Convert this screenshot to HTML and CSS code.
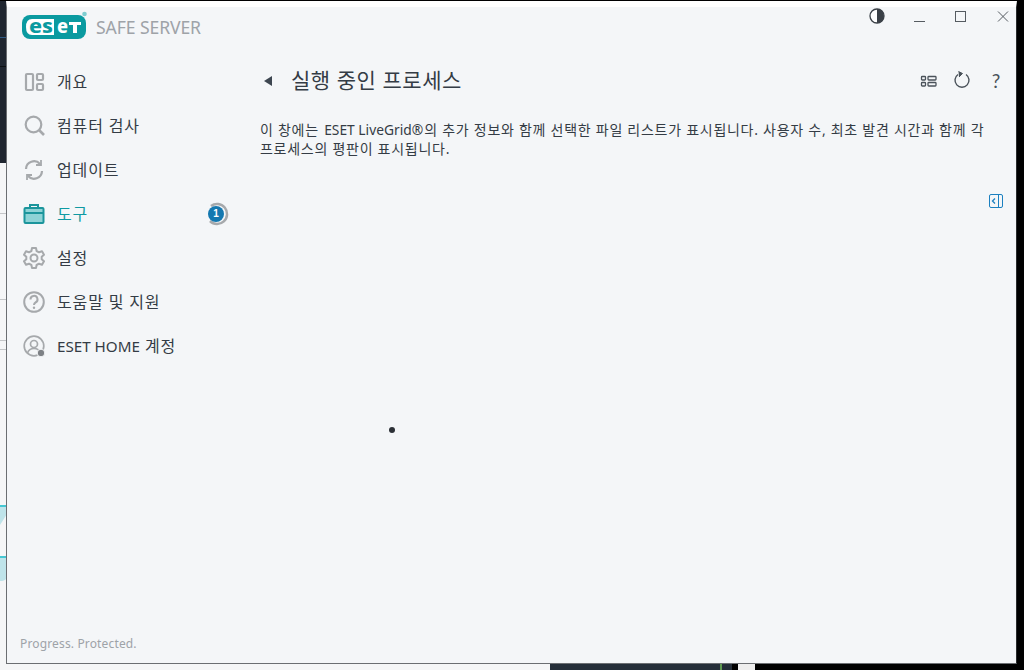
FILE: index.html
```html
<!DOCTYPE html>
<html lang="ko">
<head>
<meta charset="utf-8">
<title>ESET Safe Server</title>
<link rel="stylesheet" href="styles.css">
</head>
<body>
<div class="desk desk-dark"><i class="dl dl-blue"></i><i class="dl dl-black"></i></div>
<div class="desk desk-light"><i class="gl gl1"></i><i class="gl gl2"></i><i class="gl gl3"></i><i class="gl gl4"></i><i class="tl tl1"></i><i class="tl tl2"></i></div>
<div class="desk desk-bar"></div>
<div class="desk desk-pale"></div>
<div class="desk desk-tick"></div>

<div class="window">
  <aside class="sidebar">
    <div class="brand">
      <svg class="logo" width="68" height="28" viewBox="0 0 68 28">
        <rect x="1" y="3" width="64" height="24" rx="8" fill="#0a9aa0"/>
        <path d="M11 7 H33 V23 H11 Q5 23 5 15 Q5 7 11 7 Z" fill="#fff"/>
        <text class="logo-a" x="8" y="21" textLength="24" lengthAdjust="spacingAndGlyphs">es</text>
        <text class="logo-b" x="36" y="21" textLength="11" lengthAdjust="spacingAndGlyphs">e</text>
        <path d="M48 10 H60 V13 H56 V21 H52 V13 H48 Z" fill="#fff"/>
        <circle cx="63.500" cy="2" r="2.300" fill="#7fcdd0"/>
      </svg>
      <span class="product">SAFE SERVER</span>
    </div>
    <nav class="nav">
      <a class="nav-item">
        <svg class="ico" viewBox="0 0 22 22" fill="none" stroke="#a6a9ac" stroke-width="2.200"><rect x="3" y="3" width="7" height="16" rx="1"/><rect x="14" y="3" width="6" height="6" rx="1"/><rect x="14" y="13" width="6" height="6" rx="1"/></svg>
        <span>개요</span>
      </a>
      <a class="nav-item">
        <svg class="ico" viewBox="0 0 22 22" fill="none" stroke="#a6a9ac" stroke-width="2.200"><circle cx="10.500" cy="9.500" r="7.800"/><path d="M16 15 L21 20" stroke-width="2.600"/></svg>
        <span>컴퓨터 검사</span>
      </a>
      <a class="nav-item">
        <svg class="ico" viewBox="0 0 22 22" fill="none" stroke="#a6a9ac" stroke-width="2.200"><path d="M3 10 A8 8 0 0 1 17 5"/><path d="M19 12 A8 8 0 0 1 5 17"/><path d="M18 1 V6 H13" stroke-width="1.800"/><path d="M4 21 V16 H9" stroke-width="1.800"/></svg>
        <span>업데이트</span>
      </a>
      <a class="nav-item is-active">
        <svg class="ico" viewBox="0 0 22 22" fill="none" stroke="#1b959c" stroke-width="2"><path d="M7 5 V2 H15 V5"/><rect x="1.500" y="5" width="19" height="15" rx="1" fill="#8dd3d6"/><path d="M2 10 H20"/></svg>
        <span>도구</span>
        <span class="badge"><svg class="ring" width="24" height="24" viewBox="0 0 24 24" fill="none"><path d="M6 4 A10 10 0 1 1 5 19" stroke="#a6a9ac" stroke-width="2.500"/></svg><b class="badge-num">1</b></span>
      </a>
      <a class="nav-item">
        <svg class="ico" viewBox="0 0 22 22" fill="none" stroke="#a6a9ac" stroke-width="2"><path d="M9 1 H13 L13.600 4 L16 5.300 L19 4.300 L21 7.700 L18.700 9.700 V12.300 L21 14.300 L19 17.700 L16 16.700 L13.600 18 L13 21 H9 L8.400 18 L6 16.700 L3 17.700 L1 14.300 L3.300 12.300 V9.700 L1 7.700 L3 4.300 L6 5.300 L8.400 4 Z" stroke-linejoin="round"/><circle cx="11" cy="11" r="3.500"/></svg>
        <span>설정</span>
      </a>
      <a class="nav-item">
        <svg class="ico" viewBox="0 0 22 22" fill="none" stroke="#a6a9ac" stroke-width="2"><circle cx="11" cy="11" r="9.800"/><path d="M7.500 8.500 A3.500 3.500 0 1 1 12.500 11.500 Q11 12.300 11 14"/><circle cx="11" cy="16.800" r="1.200" fill="#a6a9ac" stroke="none"/></svg>
        <span>도움말 및 지원</span>
      </a>
      <a class="nav-item">
        <svg class="ico" viewBox="0 0 22 22" fill="none" stroke="#a6a9ac" stroke-width="1.700"><circle cx="11" cy="11" r="9.800"/><circle cx="11" cy="9" r="3.500"/><path d="M4.500 18 Q6 13.500 11 13.500 Q16 13.500 17.500 18"/><circle cx="18" cy="18" r="3.800" fill="#7d8185" stroke="#f4f6f8" stroke-width="1"/></svg>
        <span><span class="lat">ESET HOME</span> 계정</span>
      </a>
    </nav>
    <p class="tagline">Progress. Protected.</p>
  </aside>

  <main class="main">
    <div class="winbar">
      <svg class="wbtn" width="42" height="20" viewBox="0 0 42 20"><circle cx="21" cy="9" r="7" fill="#fff" stroke="#3a4047" stroke-width="1.300"/><path d="M21 2 A7 7 0 0 1 21 16 Z" fill="#3a4047"/></svg>
      <svg class="wbtn" width="42" height="20" viewBox="0 0 42 20"><path d="M16 14.500 H27" stroke="#555b61"/></svg>
      <svg class="wbtn" width="42" height="20" viewBox="0 0 42 20"><rect x="15.500" y="4.500" width="10" height="10" fill="none" stroke="#555b61"/></svg>
      <svg class="wbtn" width="42" height="20" viewBox="0 0 42 20"><path d="M16 4.500 L26 14.500 M26 4.500 L16 14.500" stroke="#555b61" fill="none"/></svg>
    </div>
    <header class="page-head">
      <svg class="back" width="10" height="12" viewBox="0 0 10 12"><path d="M9 1 V11 L1 6 Z" fill="#3d4650"/></svg>
      <h1 class="title">실행 중인 프로세스</h1>
      <div class="tools">
        <svg width="34" height="22" viewBox="0 0 34 22" fill="none" stroke="#4a525a" stroke-width="1.300"><rect x="10.500" y="6.500" width="4" height="3.500" rx=".8"/><rect x="10.500" y="12.500" width="4" height="3.500" rx=".8"/><rect x="17" y="6.500" width="8" height="3.500" rx=".8"/><rect x="17" y="12.500" width="8" height="3.500" rx=".8"/></svg>
        <svg width="34" height="22" viewBox="0 0 34 22" fill="none" stroke="#4a525a" stroke-width="1.400"><path d="M13 4.500 A7 7 0 1 0 21 4.500"/><path d="M13.500 1.500 L17.500 3.500 L14 7" fill="#4a525a" stroke-width="1"/></svg>
        <span class="help">?</span>
      </div>
    </header>
    <p class="intro">이 창에는 <span class="lat">ESET LiveGrid®</span>의 추가 정보와 함께 선택한 파일 리스트가 표시됩니다. 사용자 수, 최초 발견 시간과 함께 각<br>프로세스의 평판이 표시됩니다.</p>
    <div class="panel-row">
      <svg width="14" height="14" viewBox="0 0 14 14" fill="none" stroke="#1b80c0"><rect x=".5" y=".5" width="13" height="13" rx="1.500"/><path d="M9.500 1 V13"/><path d="M6 4.500 L3.500 7 L6 9.500" stroke-width="1.300"/></svg>
    </div>
    <i class="spinner-dot"></i>
  </main>
</div>
</body>
</html>
```
FILE: styles.css
```css
* { box-sizing: border-box; }
html, body { margin: 0; height: 100%; }
body {
  position: relative;
  width: 1024px;
  height: 670px;
  overflow: hidden;
  background: #000;
  font-family: "Noto Sans", "Noto Sans CJK KR", sans-serif;
  color: #343c45;
}
.desk { position: absolute; }
.desk i { position: absolute; display: block; }
.desk-dark { left: 0; top: 1px; width: 7px; height: 162px; background: #1f2630; }
.dl { left: 0; width: 7px; height: 1px; }
.dl-blue { top: 36px; background: #2f5a85; }
.dl-black { top: 65px; background: #0c0f12; }
.desk-light { left: 0; top: 163px; width: 550px; height: 507px; background: #f5f6f7; }
.gl { left: 0; width: 7px; height: 1px; background: #c4c6c8; }
.gl1 { top: 50px; }
.gl2 { top: 136px; }
.gl3 { top: 177px; }
.gl4 { top: 186px; }
.tl { left: 0; width: 7px; background: #bfe4ea; border-top: 2px solid #45c7d2; }
.tl1 { top: 342px; height: 20px; clip-path: polygon(0 0, 100% 0, 100% 45%, 0 100%); }
.tl2 { top: 393px; height: 25px; border-bottom-right-radius: 5px; }
.desk-bar { left: 550px; top: 663px; width: 182px; height: 7px; background: #252e39; }
.desk-pale { left: 738px; top: 663px; width: 17px; height: 7px; background: #eeeeee; }
.desk-tick { left: 720px; top: 663px; width: 2px; height: 7px; background: #5f9a52; }

.window {
  position: absolute;
  left: 6px;
  top: 1px;
  width: 1011px;
  height: 663px;
  display: flex;
  background: #f4f6f8;
  border-top: 6px solid #fff;
  border-left: 1px solid #6b6e72;
  border-bottom: 1px solid #6b6e72;
  border-right: 1px solid #2a2c2e;
}

.sidebar { width: 233px; flex: none; display: flex; flex-direction: column; }
.brand { height: 53px; padding: 5px 0 0 14px; display: flex; align-items: flex-start; gap: 7px; }
.logo { flex: none; overflow: visible; }
.logo-a, .logo-b { font: 800 20px/1 "Noto Sans", sans-serif; }
.logo-a { fill: #0a9aa0; }
.logo-b { fill: #fff; }
.product { font-size: 17.6px; line-height: 28px; margin-top: 1px; color: #9ea3a8; letter-spacing: -.1px; }

.nav { display: flex; flex-direction: column; }
.nav-item { height: 44px; display: flex; align-items: center; gap: 12px; padding-left: 16px; font-size: 16px; letter-spacing: .85px; color: #343c45; position: relative; }
.nav-item > span:not(.badge) { margin-top: -2px; }
.lat { font-size: 15.2px; letter-spacing: 0; }
.ico { width: 22px; height: 22px; flex: none; }
.is-active { color: #0f9aa3; }
.badge { margin-left: auto; margin-right: 11px; width: 24px; height: 24px; position: relative; display: block; }
.ring { position: absolute; inset: 0; }
.badge-num {
  position: absolute; left: 3px; top: 4px; width: 16px; height: 16px; border-radius: 50%;
  background: #1478b0; color: #fff; font: 700 10px/16px "Liberation Sans", sans-serif; letter-spacing: 0; text-align: center;
}
.tagline { margin: auto 0 11px 13px; font-size: 12px; line-height: 16px; letter-spacing: .15px; color: #9ea3a8; }

.main { flex: 1; min-width: 0; position: relative; padding-left: 20px; }
.winbar { height: 20px; margin-right: -8px; display: flex; justify-content: flex-end; align-items: flex-start; }
.wbtn { flex: none; display: block; }
.page-head { height: 68px; padding-top: 40px; display: flex; align-items: center; }
.back { flex: none; margin-left: 3px; margin-right: 18px; }
.title { margin: -2px 0 0; font-size: 21px; letter-spacing: .55px; font-weight: 400; line-height: 28px; color: #343c45; }
.tools { margin-left: auto; margin-right: 3px; display: flex; align-items: center; }
.tools svg { display: block; }
.help { width: 34px; text-align: center; font-family: Lato, sans-serif; font-size: 19px; line-height: 22px; color: #4a525a; }
.intro { margin: 25px 0 0; white-space: nowrap; font-size: 14px; letter-spacing: .73px; line-height: 19px; color: #343c45; }
.intro .lat { font-size: 13.8px; letter-spacing: 0; margin: 0 1px; }
.panel-row { display: flex; justify-content: flex-end; padding-right: 13px; margin-top: 36px; }
.panel-row svg { display: block; }
.spinner-dot { position: absolute; left: 149px; top: 420px; width: 6px; height: 6px; border-radius: 50%; background: #2b3036; }
```
